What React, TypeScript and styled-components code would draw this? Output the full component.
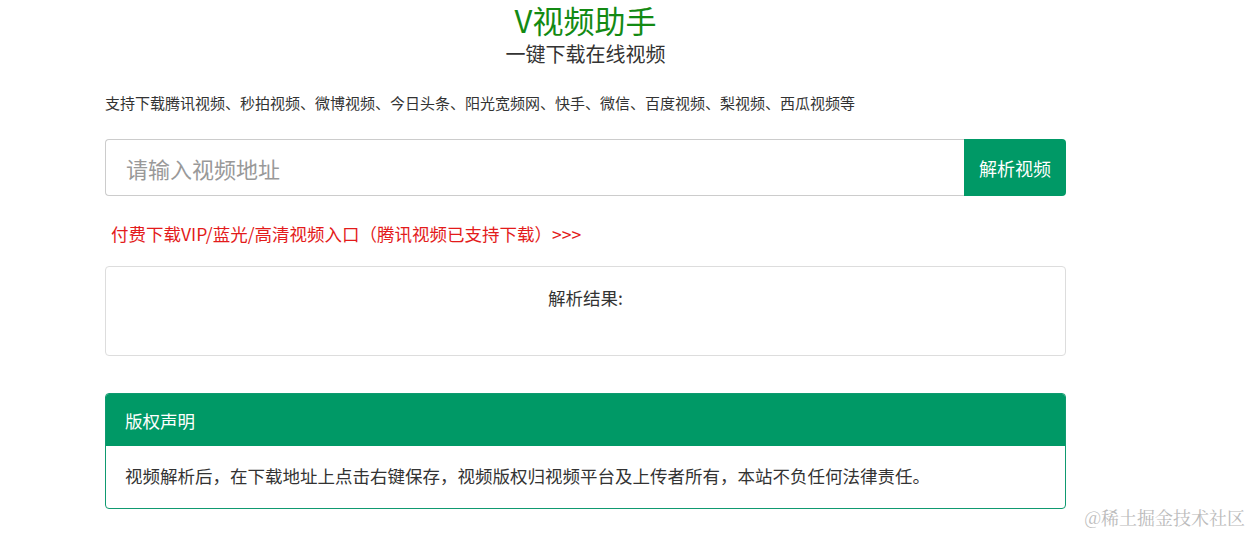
import { createGlobalStyle, styled } from "styled-components";

const GlobalStyle = createGlobalStyle`
  * { box-sizing: border-box; }
  html, body {
    margin: 0;
    padding: 0;
    background: #fff;
    font-family: "Microsoft YaHei", "Noto Sans CJK SC", sans-serif;
    color: #333;
  }
`;

const platforms =
  "支持下载腾讯视频、秒拍视频、微博视频、今日头条、阳光宽频网、快手、微信、百度视频、梨视频、西瓜视频等";

const App = () => {
  return (
    <Page>
      <GlobalStyle />
      <Container>
        <Header>
          <Title>V视频助手</Title>
          <Subtitle>一键下载在线视频</Subtitle>
        </Header>
        <Support>{platforms}</Support>
        <SearchRow>
          <UrlInput placeholder="请输入视频地址" />
          <ParseButton>解析视频</ParseButton>
        </SearchRow>
        <VipLink>付费下载VIP/蓝光/高清视频入口（腾讯视频已支持下载）&gt;&gt;&gt;</VipLink>
        <ResultBox>解析结果:</ResultBox>
        <Panel>
          <PanelHeading>版权声明</PanelHeading>
          <PanelBody>
            视频解析后，在下载地址上点击右键保存，视频版权归视频平台及上传者所有，本站不负任何法律责任。
          </PanelBody>
        </Panel>
      </Container>
      <Watermark>@稀土掘金技术社区</Watermark>
    </Page>
  );
};

export default App;

const Page = styled.div`
  position: relative;
  width: 1251px;
  height: 535px;
  overflow: hidden;
`;

const Container = styled.div`
  width: 961px;
  margin-left: 105px;
  display: flex;
  flex-direction: column;
`;

const Header = styled.div`
  display: flex;
  flex-direction: column;
  align-items: center;
`;

const Title = styled.h1`
  margin: 0;
  font-size: 31px;
  font-weight: normal;
  line-height: 40px;
  color: #138a13;
`;

const Subtitle = styled.h2`
  margin: 0;
  font-size: 20px;
  font-weight: normal;
  line-height: 28px;
  color: #333;
`;

const Support = styled.p`
  margin: 25px 0 0;
  font-size: 15px;
  line-height: 20px;
  color: #333;
`;

const SearchRow = styled.div`
  display: flex;
  margin-top: 26px;
  height: 57px;
`;

const UrlInput = styled.input`
  flex: 1;
  height: 100%;
  border: 1px solid #ccc;
  border-right: none;
  border-radius: 4px 0 0 4px;
  padding: 0 20px;
  font-size: 22px;
  font-family: inherit;
  color: #333;
  outline: none;
  &::placeholder {
    color: #999;
  }
`;

const ParseButton = styled.button`
  width: 102px;
  height: 100%;
  border: none;
  border-radius: 0 4px 4px 0;
  background-color: #009966;
  color: #fff;
  font-size: 18px;
  font-family: inherit;
  cursor: pointer;
`;

const VipLink = styled.a`
  display: block;
  margin: 27px 0 0 6px;
  font-size: 17.5px;
  line-height: 22px;
  color: #e31b1b;
  cursor: pointer;
`;

const ResultBox = styled.div`
  margin-top: 21px;
  height: 90px;
  border: 1px solid #ddd;
  border-radius: 4px;
  padding-top: 20px;
  text-align: center;
  font-size: 17.5px;
  line-height: 22px;
  color: #333;
`;

const Panel = styled.div`
  margin-top: 37px;
  border: 1px solid #0f9a70;
  border-radius: 4px;
  overflow: hidden;
`;

const PanelHeading = styled.div`
  height: 52px;
  padding: 0 19px;
  display: flex;
  align-items: center;
  background-color: #009966;
  color: #fff;
  font-size: 17.5px;
`;

const PanelBody = styled.div`
  padding: 18px 19px 20px;
  font-size: 17.5px;
  line-height: 24px;
  color: #333;
`;

const Watermark = styled.div`
  position: absolute;
  right: 6px;
  bottom: 5px;
  font-size: 18px;
  color: #bbb;
  font-family: "Noto Serif CJK SC", "Noto Sans CJK SC", serif;
`;
